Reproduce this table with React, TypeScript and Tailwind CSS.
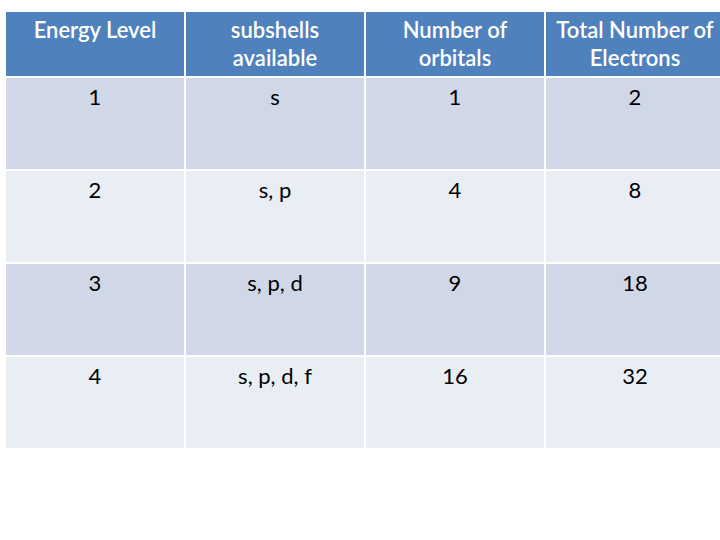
const header = ["Energy Level", "subshells available", "Number of orbitals", "Total Number of Electrons"];

const rows = [
  ["1", "s", "1", "2"],
  ["2", "s, p", "4", "8"],
  ["3", "s, p, d", "9", "18"],
  ["4", "s, p, d, f", "16", "32"],
];

export default function App() {
  return (
    <div className="h-[540px] w-[720px] overflow-hidden bg-white pl-[6px] pt-[12px] font-['Lato','Open_Sans',sans-serif] text-[22px] leading-[28px]">
      <div className="grid w-[718px] grid-cols-[repeat(4,178px)] gap-[2px]">
        {header.map((h) => (
          <div key={h} className="flex h-[64px] justify-center bg-[#4f81bd] pt-[4px] text-center font-semibold text-white">
            <span className="block max-w-[176px]">{h}</span>
          </div>
        ))}
        {rows.map((row, i) =>
          row.map((cell, j) => (
            <div
              key={`${i}-${j}`}
              className={`h-[91px] pt-[5px] text-center text-black ${i % 2 === 0 ? "bg-[#d0d8e8]" : "bg-[#e9edf4]"}`}
            >
              {cell}
            </div>
          )),
        )}
      </div>
    </div>
  );
}
